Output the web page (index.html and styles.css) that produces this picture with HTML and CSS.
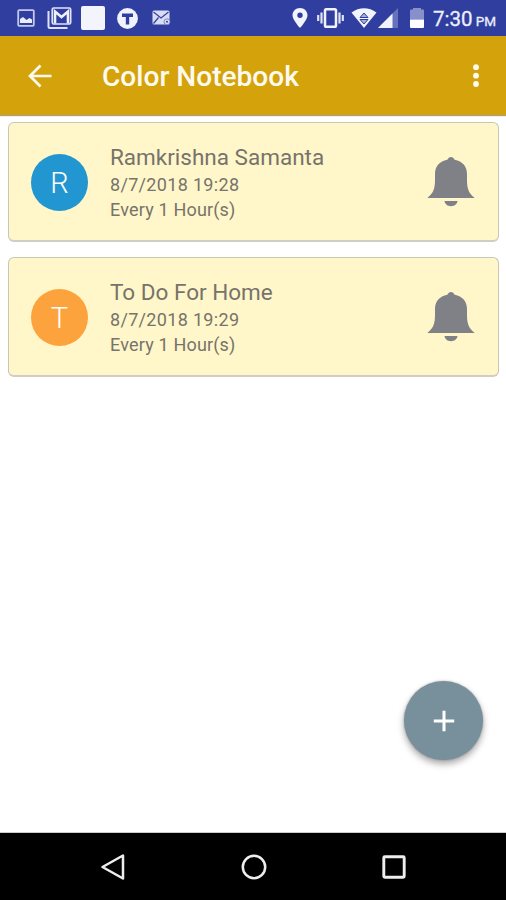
FILE: index.html
```
<!DOCTYPE html>
<html lang="en">
<head>
<meta charset="utf-8">
<title>Color Notebook</title>
<link rel="stylesheet" href="styles.css">
</head>
<body>
<div class="screen">
  <div class="status">
    <div class="notifications">
      <svg width="18" height="18" viewBox="0 0 18 18"><rect x="1.200" y="1.200" width="15.600" height="15.600" rx="1" fill="none" stroke="#c3c9ea" stroke-width="1.800"/><path d="M3 14v-4l3-2 3.500 3 3-2 2.500 1.500V14z" fill="#e9ecfb"/></svg>
      <svg class="gmail" width="25" height="24" viewBox="0 0 25 24"><path d="M1.500 5v15.500a1.500 1.500 0 0 0 1.500 1.500h17.500" fill="none" stroke="#dfe3f8" stroke-width="2"/><rect x="5.200" y="2" width="18.500" height="16" rx="1.500" fill="#303f9f" stroke="#dfe3f8" stroke-width="1.600"/><path d="M8 17.500V5.500l6.500 5.500L21 5.500v12" fill="none" stroke="#eef0fc" stroke-width="2.600"/></svg>
      <div class="blank-app"></div>
      <svg class="t-badge" width="21" height="21" viewBox="0 0 21 21"><circle cx="10.500" cy="10.500" r="10.400" fill="#f0f2fc"/><path d="M5 7.200h11M10.500 7.200v9.300" fill="none" stroke="#303f9f" stroke-width="3.400"/></svg>
      <svg class="mail" width="19" height="16" viewBox="0 0 19 16"><rect x=".5" y=".5" width="17" height="14" rx="1.500" fill="#d9ddf3"/><path d="M1.500 2L9 8l7.500-6M1.500 13.500l5-6" fill="none" stroke="#303f9f" stroke-width="1.200"/><circle cx="15" cy="11.800" r="3" fill="#d9ddf3" stroke="#6572bd" stroke-width=".8"/><circle cx="15" cy="11.800" r="1" fill="#303f9f"/></svg>
    </div>
    <div class="system">
      <svg width="16" height="20" viewBox="0 0 16 20"><path fill-rule="evenodd" d="M8 0C3.700 0 .5 3.200.5 7.300.5 12 8 20 8 20s7.500-8 7.500-12.700C15.500 3.200 12.300 0 8 0zm0 4.600a2.700 2.700 0 1 1 0 5.400 2.700 2.700 0 0 1 0-5.400z" fill="#f1f3fd"/></svg>
      <svg class="vibrate" width="27" height="20" viewBox="0 0 27 20"><rect x="8" y="1.300" width="11" height="17.400" rx="1.300" fill="none" stroke="#f1f3fd" stroke-width="2.500"/><path d="M4.500 4.500v11M22.500 4.500v11M1.200 7v6M25.800 7v6" stroke="#dfe3f8" stroke-width="2.200"/></svg>
      <svg class="wifi" width="26" height="20" viewBox="0 0 26 20"><path d="M.5 4.500C8-1.200 18-1.200 25.500 4.500L13 20z" fill="#f1f3fd"/><path d="M9 9.500l4-4.500 4 4.500zM9 11.500h8L13 16z" fill="#a5aede" stroke="#303f9f" stroke-width="1"/></svg>
      <svg class="signal" width="20" height="20" viewBox="0 0 20 20"><path d="M20 0v20H0z" fill="#6672ba"/><path d="M14.500 5.500V20H0z" fill="#f1f3fd"/></svg>
      <svg class="battery" width="14" height="20" viewBox="0 0 14 20"><path d="M3 0h8v1.500h2a1 1 0 0 1 1 1v9H0v-9a1 1 0 0 1 1-1h2z" fill="#8790ca"/><path d="M0 11.500h14V19a1 1 0 0 1-1 1H1a1 1 0 0 1-1-1z" fill="#fff"/></svg>
      <div class="clock"><span class="time">7:30</span><span class="meridiem">PM</span></div>
    </div>
  </div>
  <div class="toolbar">
    <svg width="24" height="24" viewBox="0 0 24 24"><path d="M23.500 12H2.500M12.500 1.500L2 12l10.500 10.500" fill="none" stroke="#fffaf0" stroke-width="2.700"/></svg>
    <h1>Color Notebook</h1>
    <svg class="more" width="8" height="24" viewBox="0 0 8 24"><g fill="#fffaf0"><circle cx="4" cy="3.200" r="2.900"/><circle cx="4" cy="11.700" r="2.900"/><circle cx="4" cy="20" r="2.900"/></g></svg>
  </div>
  <div class="notes">
    <div class="note">
      <div class="avatar blue">R</div>
      <div class="details">
        <div class="name">Ramkrishna Samanta</div>
        <div class="line date">8/7/2018 19:28</div>
        <div class="line repeat">Every 1 Hour(s)</div>
      </div>
      <svg class="bell" width="48" height="50" viewBox="0 0 48 50"><path d="M24 0c1.600 0 2.900 1.200 3.700 2.800C35.500 4.300 40 9.500 40 17v6c0 9 2 13.500 7.700 18H.3C6 36.500 8 32 8 23v-6C8 9.500 12.500 4.300 20.300 2.800 21.100 1.200 22.400 0 24 0zM17.500 44h13c-.5 3.300-3 5.200-6.500 5.200s-6-1.900-6.500-5.200z" fill="#808187"/></svg>
    </div>
    <div class="note">
      <div class="avatar orange">T</div>
      <div class="details">
        <div class="name">To Do For Home</div>
        <div class="line date">8/7/2018 19:29</div>
        <div class="line repeat">Every 1 Hour(s)</div>
      </div>
      <svg class="bell" width="48" height="50" viewBox="0 0 48 50"><path d="M24 0c1.600 0 2.900 1.200 3.700 2.800C35.500 4.300 40 9.500 40 17v6c0 9 2 13.500 7.700 18H.3C6 36.500 8 32 8 23v-6C8 9.500 12.500 4.300 20.300 2.800 21.100 1.200 22.400 0 24 0zM17.500 44h13c-.5 3.300-3 5.200-6.500 5.200s-6-1.900-6.500-5.200z" fill="#808187"/></svg>
    </div>
  </div>
  <div class="add"><svg width="22" height="22" viewBox="0 0 22 22"><path d="M11 .8v20.400M.8 11h20.400" stroke="#fff" stroke-width="3"/></svg></div>
  <div class="nav">
    <svg width="28" height="28" viewBox="0 0 28 28"><path d="M3.500 14L24 2.500v23z" fill="none" stroke="#eee" stroke-width="2.500" stroke-linejoin="round"/></svg>
    <svg width="28" height="28" viewBox="0 0 28 28"><circle cx="14" cy="14" r="11.200" fill="none" stroke="#eee" stroke-width="2.500"/></svg>
    <svg width="28" height="28" viewBox="0 0 28 28"><rect x="3.800" y="3.800" width="20.400" height="20.400" rx="1" fill="none" stroke="#eee" stroke-width="2.900"/></svg>
  </div>
</div>
</body>
</html>
```
FILE: styles.css
```
* { box-sizing: border-box; }
body { margin: 0; font-family: Roboto, "Liberation Sans", sans-serif; background: #fff; }
svg { display: block; flex: none; }
.screen { position: relative; display: flex; flex-direction: column; width: 506px; height: 900px; overflow: hidden; }
.status { height: 36px; flex: none; display: flex; align-items: center; justify-content: space-between; padding: 0 10px 0 17px; background: #303f9f; }
.notifications, .system { display: flex; align-items: center; }
.gmail { margin-left: 12px; }
.blank-app { width: 24px; height: 24px; margin-left: 9px; border-radius: 2px; background: #f3f4fc; }
.t-badge { margin-left: 12px; }
.mail { margin-left: 14px; }
.vibrate { margin-left: 9px; }
.wifi { margin-left: 7px; }
.signal { margin-left: 1px; }
.battery { margin-left: 12px; }
.clock { display: flex; align-items: baseline; width: 63px; margin-left: 9px; padding-top: 4px; justify-content: space-between; color: #eceffd; line-height: 32px; }
.time { font-size: 20.500px; -webkit-text-stroke: .3px #eceffd; }
.meridiem { font-size: 13.500px; -webkit-text-stroke: .3px #eceffd; }
.toolbar { height: 79px; flex: none; display: flex; align-items: center; padding: 0 26px 0 28px; background: #d4a30b; box-shadow: 0 1px 1px #aaa08a; }
.toolbar h1 { flex: 1; margin: 3px 0 0 50px; font-size: 28.100px; line-height: 34px; font-weight: 500; color: #fffaf0; }
.notes { flex: 1; display: flex; flex-direction: column; gap: 15px; padding: 7px 7px 0 8px; }
.note { height: 120px; display: flex; align-items: center; padding: 0 23px 0 22px; border: 1px solid #c9c6b4; border-bottom: 2px solid #d0cdc2; border-radius: 6px; background: #fff7ca; }
.avatar { flex: none; width: 57px; height: 57px; margin-top: 1px; border-radius: 50%; color: #fff; font-size: 29px; font-weight: 300; line-height: 58px; text-align: center; }
.blue { background: #2196d0; }
.orange { background: #fda33d; }
.details { flex: 1; margin-left: 22px; padding-top: 2px; color: #77736a; white-space: nowrap; }
.name { font-size: 22.500px; line-height: 28px; margin-bottom: 1px; }
.line { font-size: 18px; line-height: 25px; }
.date { letter-spacing: .32px; }
.repeat { letter-spacing: .18px; }
.bell { margin-top: 1px; }
.add { position: absolute; left: 404px; top: 681px; width: 79px; height: 79px; display: flex; align-items: center; justify-content: center; border-radius: 50%; background: #78909c; box-shadow: 0 4px 7px rgba(0,0,0,.35), 0 0 2px rgba(0,0,0,.3); }
.nav { height: 67px; flex: none; display: flex; align-items: center; justify-content: space-between; padding: 0 98px 0 99px; background: #000; box-shadow: 0 -1px 0 #ccc; }
```
